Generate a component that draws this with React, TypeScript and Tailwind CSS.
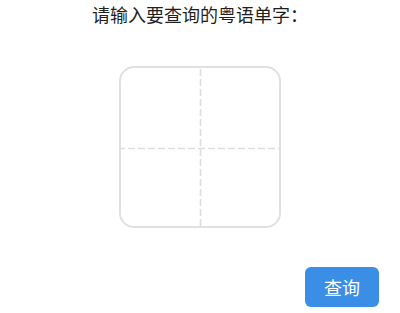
import React from "react";

export default function App() {
  return (
    <div
      className="w-[400px] h-[313px] bg-white flex flex-col items-center overflow-hidden"
      style={{ fontFamily: '"Noto Sans CJK SC", "Noto Sans", sans-serif' }}
    >
      <div className="mt-[1px] text-[18px] leading-[26px] text-[#1f1f1f]">
        请输入要查询的粤语单字：
      </div>
      <div className="relative mt-[39px] w-[162px] h-[162px] rounded-[15px] border-2 border-[#e0e0e0] bg-white overflow-hidden">
        <svg
          className="absolute inset-0"
          width="158"
          height="158"
          viewBox="0 0 158 158"
        >
          <line
            x1="0"
            y1="80.5"
            x2="158"
            y2="80.5"
            stroke="#dedede"
            strokeWidth="1.6"
            strokeDasharray="7 3"
            strokeDashoffset="3"
          />
          <line
            x1="79.5"
            y1="0"
            x2="79.5"
            y2="158"
            stroke="#dedede"
            strokeWidth="1.6"
            strokeDasharray="7 3"
            strokeDashoffset="-1"
          />
        </svg>
      </div>
      <div className="w-full flex justify-end pr-[21px] mt-[39px]">
        <button className="w-[74px] h-[40px] rounded-[6px] bg-[#3a8ee6] text-white text-[18px] leading-none flex items-center justify-center">
          查询
        </button>
      </div>
    </div>
  );
}
